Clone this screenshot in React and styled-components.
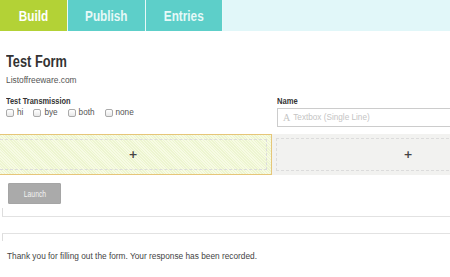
import React from 'react';
import styled, { createGlobalStyle } from 'styled-components';

const GlobalStyle = createGlobalStyle`
  html, body {
    margin: 0;
    padding: 0;
    background: #fff;
    overflow: hidden;
  }
  body {
    font-family: "Liberation Sans", Arial, sans-serif;
    font-variant-ligatures: none;
    color: #444;
  }
`;

// condensed bold heading face, squeezed from Liberation Sans
const Squeeze = styled.span`
  display: inline-block;
  transform: scaleX(${p => p.s || 0.8});
  transform-origin: ${p => (p.center ? 'center' : 'left')} center;
  white-space: nowrap;
`;

const Page = styled.div`
  width: 450px;
  height: 277px;
  overflow: hidden;
`;

const Content = styled.div`
  width: 543px;
`;

const TabBar = styled.nav`
  display: flex;
  height: 31px;
  background: #e1f7f9;
`;

const Tab = styled.div`
  width: ${p => p.w}px;
  display: flex;
  align-items: center;
  justify-content: center;
  background: ${p => (p.active ? '#b3d236' : '#5dcfc9')};
  color: ${p => (p.active ? '#fff' : '#e6f9f8')};
  border-right: 1px solid #e8f8f8;
  font-weight: bold;
  font-size: 14px;
  padding-top: 1px;
`;

const Header = styled.div`
  padding: 22px 6px 0;
`;

const Title = styled.h1`
  margin: 0;
  font-weight: bold;
  font-size: 16px;
  color: #333;
  line-height: 18px;
`;

const Subtitle = styled.p`
  margin: 4px 0 0;
  font-size: 8.4px;
  color: #555;
`;

const FieldRow = styled.div`
  display: grid;
  grid-template-columns: 271px 1fr;
  margin-top: 11px;
`;

const Field = styled.div`
  padding-left: 6px;
`;

const Label = styled.div`
  font-weight: bold;
  font-size: 9.5px;
  color: #333;
  line-height: 10px;
`;

const Options = styled.div`
  display: flex;
  gap: 10px;
  margin-top: 2px;
`;

const Option = styled.label`
  display: flex;
  align-items: center;
  gap: 3px;
  font-size: 8.2px;
  color: #555;
`;

const Box = styled.span`
  width: 6px;
  height: 6px;
  border: 1px solid #aaa;
  border-radius: 2px;
  background: linear-gradient(#fff, #e8e8e8);
`;

const TextBox = styled.div`
  margin-top: 2px;
  height: 17px;
  border: 1px solid #ccc;
  display: flex;
  align-items: center;
  padding-left: 5px;
  font-size: 8.2px;
  color: #c4c4c4;
`;

const Glyph = styled.span`
  font-family: "Liberation Serif", serif;
  font-size: 10px;
  margin-right: 3px;
`;

const DropRow = styled.div`
  display: grid;
  grid-template-columns: 272px 271px;
  margin-top: 7px;
  height: 41px;
`;

const Drop = styled.div`
  display: flex;
  padding: 4px 4px 4px 0;
  background: ${p =>
    p.active
      ? 'repeating-linear-gradient(45deg, #f7fbe4 0 1px, #edf5d0 1px 2px)'
      : '#f2f2f0'};
  border: ${p => (p.active ? '1px solid #e6c679' : 'none')};
  border-left: none;
`;

const DropInner = styled.div`
  flex: 1;
  display: flex;
  align-items: center;
  justify-content: center;
  border-top: 1px dashed #dcdcdc;
  border-bottom: 1px dashed #dcdcdc;
  border-right: ${p => (p.edge ? '1px dashed #dcdcdc' : 'none')};
  border-left: ${p => (p.edge ? 'none' : '1px dashed #dcdcdc')};
  margin-left: ${p => (p.edge ? 0 : 4)}px;
`;

const Plus = styled.span`
  font-family: "DejaVu Sans", sans-serif;
  font-weight: bold;
  font-size: 11px;
  color: #444;
`;

const Launch = styled.button`
  display: flex;
  align-items: center;
  justify-content: center;
  margin: 8px 0 0 8px;
  width: 53px;
  height: 21px;
  border: 1px solid #a5a5a5;
  border-radius: 1px;
  background: #aaa;
  color: #f2f2f2;
  font-family: "Liberation Sans", sans-serif;
  font-size: 8.5px;
  padding: 0;
`;

const PanelEnd = styled.div`
  margin: 4px 0 0 2px;
  height: 8px;
  border-left: 1px solid #ddd;
  border-bottom: 1px solid #e2e2e2;
`;

const Response = styled.div`
  margin: 16px 0 0 2px;
  border-left: 1px solid #ddd;
  border-top: 1px solid #e2e2e2;
  height: 7px;
`;

const Thanks = styled.p`
  margin: 10px 0 0 7px;
  font-size: 8.3px;
  color: #444;
`;

export default function App() {
  return (
    <Page>
      <GlobalStyle />
      <Content>
        <TabBar>
          <Tab w={67} active><Squeeze center s={0.84}>Build</Squeeze></Tab>
          <Tab w={77}><Squeeze center s={0.84}>Publish</Squeeze></Tab>
          <Tab w={76}><Squeeze center s={0.84}>Entries</Squeeze></Tab>
        </TabBar>
        <Header>
          <Title><Squeeze s={0.8}>Test Form</Squeeze></Title>
          <Subtitle>Listoffreeware.com</Subtitle>
        </Header>
        <FieldRow>
          <Field>
            <Label><Squeeze s={0.78}>Test Transmission</Squeeze></Label>
            <Options>
              {['hi', 'bye', 'both', 'none'].map(o => (
                <Option key={o}><Box />{o}</Option>
              ))}
            </Options>
          </Field>
          <Field>
            <Label><Squeeze s={0.8}>Name</Squeeze></Label>
            <TextBox><Glyph>A</Glyph>Textbox (Single Line)</TextBox>
          </Field>
        </FieldRow>
        <DropRow>
          <Drop active>
            <DropInner edge><Plus>+</Plus></DropInner>
          </Drop>
          <Drop>
            <DropInner><Plus>+</Plus></DropInner>
          </Drop>
        </DropRow>
        <Launch><Squeeze center s={0.8}>Launch</Squeeze></Launch>
        <PanelEnd />
        <Response />
        <Thanks>Thank you for filling out the form. Your response has been recorded.</Thanks>
      </Content>
    </Page>
  );
}
